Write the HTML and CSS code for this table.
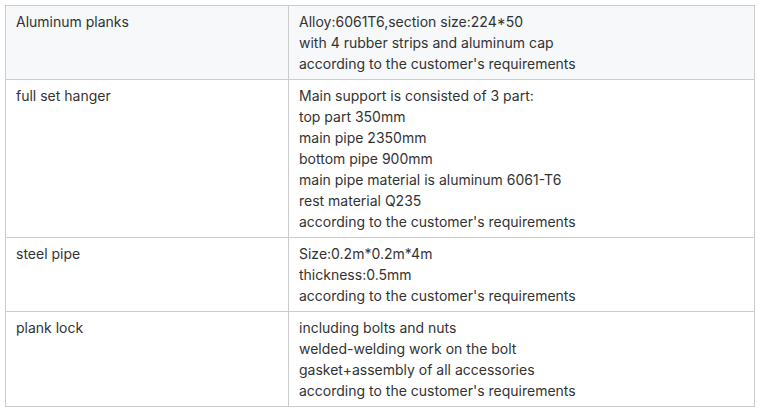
FILE: index.html
```html
<!DOCTYPE html>
<html>
<head>
<meta charset="utf-8">
<link rel="stylesheet" href="styles.css">
</head>
<body>
<table class="spec">
  <colgroup><col class="c1"><col class="c2"></colgroup>
  <tbody>
    <tr class="shade">
      <td>Aluminum planks</td>
      <td>Alloy:6061T6,section size:224*50<br>with 4 rubber strips and aluminum cap<br>according to the customer's requirements</td>
    </tr>
    <tr>
      <td>full set hanger</td>
      <td>Main support is consisted of 3 part:<br>top part 350mm<br>main pipe 2350mm<br>bottom pipe 900mm<br>main pipe material is aluminum 6061-T6<br>rest material Q235<br>according to the customer's requirements</td>
    </tr>
    <tr>
      <td>steel pipe</td>
      <td>Size:0.2m*0.2m*4m<br>thickness:0.5mm<br>according to the customer's requirements</td>
    </tr>
    <tr>
      <td>plank lock</td>
      <td>including bolts and nuts<br>welded-welding work on the bolt<br>gasket+assembly of all accessories<br>according to the customer's requirements</td>
    </tr>
  </tbody>
</table>
</body>
</html>
```
FILE: styles.css
```css
html, body {
  margin: 0;
  padding: 0;
  background: #ffffff;
}
body {
  padding: 5px;
  font-family: Inter, "Noto Sans", sans-serif;
  font-size: 14px;
  line-height: 21px;
  color: #333333;
}
.spec {
  border-collapse: collapse;
  width: 750px;
  table-layout: fixed;
}
.c1 { width: 283px; }
.spec td {
  border: 1px solid #cccccc;
  padding: 5px 10px;
  vertical-align: top;
  text-align: left;
}
.shade td {
  background: #f6f8fa;
}
```
